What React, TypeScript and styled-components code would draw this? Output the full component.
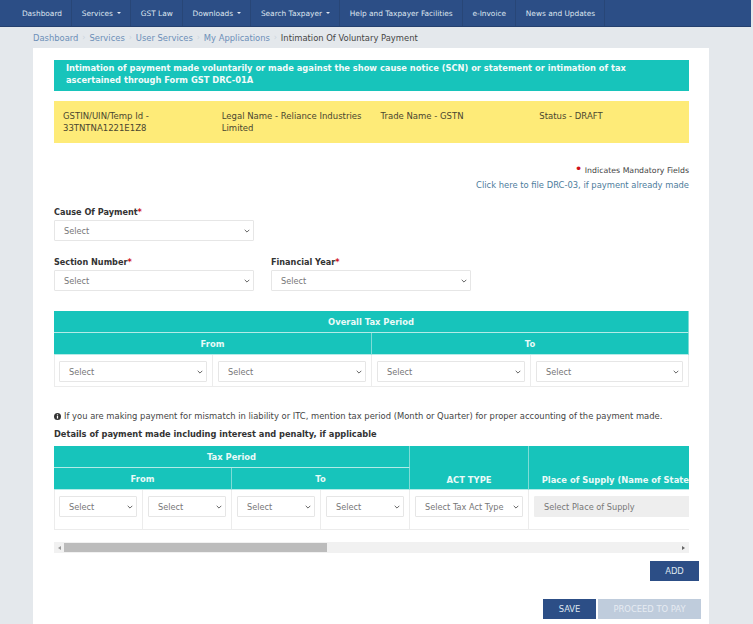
import React from "react";
import styled, { createGlobalStyle } from "styled-components";

const Global = createGlobalStyle`
  html, body { margin: 0; padding: 0; height: 100%; overflow: hidden; background: #e4e8ec; }
  body { font-family: "DejaVu Sans", Verdana, sans-serif; font-size: 8.4px; color: #333; }
  * { box-sizing: border-box; }
`;

const Page = styled.div`
  width: 753px;
  height: 624px;
  overflow: hidden;
`;

const Nav = styled.nav`
  display: flex;
  width: 751px;
  height: 27px;
  padding-left: 12.5px;
  background: #2c4e86;
  border-bottom: 1px solid #24406f;
`;

const NavItem = styled.a`
  display: flex;
  align-items: center;
  gap: 4px;
  padding: 0 9.4px;
  color: #dfe6f0;
  font-size: 7.4px;
  white-space: nowrap;
  border-right: 1px solid #284677;
`;

const Caret = styled.span`
  width: 0;
  height: 0;
  border-left: 2px solid transparent;
  border-right: 2px solid transparent;
  border-top: 2px solid #dfe6f0;
`;

const Crumbs = styled.div`
  display: flex;
  align-items: center;
  height: 21px;
  padding-left: 33px;
  font-size: 8.4px;
`;

const Crumb = styled.a`
  color: #6c8fb8;
`;

const Sep = styled.span`
  width: 11px;
  text-align: center;
  color: #ccd5de;
  font-size: 8px;
`;

const Current = styled.span`
  color: #444;
`;

const Card = styled.main`
  width: 676px;
  height: 576px;
  margin-left: 33px;
  padding: 12px 8px 0 21px;
  background: #fff;
`;

const Banner = styled.div`
  width: 635px;
  height: 31px;
  padding: 2px 12px 0;
  background: #17c4bb;
  color: #f2fbfa;
  font-weight: 700;
  font-size: 8.3px;
  line-height: 12px;
`;

const InfoBar = styled.div`
  display: grid;
  grid-template-columns: repeat(4, 1fr);
  width: 635px;
  height: 42px;
  margin-top: 10px;
  padding-top: 9px;
  background: #feeb78;
  color: #4a4630;
  font-size: 8.5px;
  line-height: 12px;
`;

const InfoCell = styled.div`
  padding: 0 8px 0 9px;
`;

const RightNote = styled.div`
  width: 635px;
  margin-top: 22px;
  text-align: right;
  font-size: 7.8px;
  line-height: 12px;
  color: #444;
`;

const Star = styled.span`
  color: #d0121b;
  font-weight: 700;
`;

const Dot = styled.span`
  color: #d0121b;
  font-size: 13px;
  line-height: 0;
`;

const FileLink = styled.a`
  display: block;
  width: 635px;
  margin-top: 2px;
  text-align: right;
  font-size: 8.4px;
  line-height: 12px;
  color: #4d7c9c;
`;

const Row = styled.div<{ $top: number }>`
  display: flex;
  gap: 17.5px;
  margin-top: ${(p) => p.$top}px;
`;

const Field = styled.div`
  width: 199.5px;
`;

const Label = styled.label`
  display: block;
  height: 14px;
  font-size: 8.15px;
  line-height: 12px;
  font-weight: 700;
  color: #333;
`;

const chevron =
  "data:image/svg+xml,%3Csvg xmlns='http://www.w3.org/2000/svg' width='6' height='4' viewBox='0 0 6 4'%3E%3Cpath d='M.7.8 3 3.1 5.3.8' fill='none' stroke='%23666' stroke-width='1'/%3E%3C/svg%3E";

const Select = styled.select<{ $locked?: boolean }>`
  display: block;
  width: 100%;
  height: 21px;
  padding: 0 14px 0 9px;
  appearance: none;
  font-family: inherit;
  font-size: 8.2px;
  color: #777;
  background-color: ${(p) => (p.$locked ? "#eeeeee" : "#fff")};
  background-image: ${(p) => (p.$locked ? "none" : `url("${chevron}")`)};
  background-repeat: no-repeat;
  background-position: right 3px center;
  border: 1px solid ${(p) => (p.$locked ? "#eeeeee" : "#e6e6e6")};
  border-radius: 1px;
  outline: none;
  opacity: 1;
`;

const TableWrap = styled.div<{ $top: number }>`
  width: 635px;
  margin-top: ${(p) => p.$top}px;
  overflow: hidden;
`;

const Table = styled.table<{ $width: number }>`
  width: ${(p) => p.$width}px;
  table-layout: fixed;
  border-collapse: separate;
  border-spacing: 0;
`;

const Th = styled.th`
  height: 22px;
  padding: 1px 0 0;
  background: #17c4bb;
  color: #eafaf8;
  font-size: 8.4px;
  font-weight: 700;
  text-align: center;
  vertical-align: middle;
  white-space: nowrap;
  border-right: 1px solid #7fdcd6;
  border-bottom: 1px solid #b4ebe7;
`;

const ThBottom = styled(Th)`
  vertical-align: bottom;
  padding-bottom: 4px;
`;

const Td = styled.td<{ $h: number }>`
  height: ${(p) => p.$h}px;
  padding: 6px 5px 0;
  vertical-align: top;
  border-right: 1px solid #ececec;
  border-bottom: 1px solid #ececec;
  &:first-child {
    padding-left: 4px;
    border-left: 1px solid #ececec;
  }
`;

const Note = styled.div`
  display: flex;
  align-items: center;
  gap: 3px;
  margin-top: 23px;
  font-size: 8.4px;
  line-height: 12px;
  color: #444;
  white-space: nowrap;
`;

const NoteIcon = styled.svg`
  flex: none;
  width: 7px;
  height: 7px;
`;

const Details = styled.div`
  margin-top: 6px;
  height: 12px;
  font-size: 8.25px;
  line-height: 12px;
  font-weight: 700;
  color: #333;
`;

const Scrollbar = styled.div`
  display: flex;
  align-items: center;
  justify-content: space-between;
  width: 635px;
  height: 11px;
  margin-top: 12px;
  padding: 0 4px;
  background: #f1f1f1;
`;

const Thumb = styled.div`
  width: 263px;
  height: 9px;
  margin-left: 3px;
  margin-right: auto;
  background: #bcbcbc;
`;

const Arrow = styled.span<{ $right?: boolean }>`
  width: 0;
  height: 0;
  border-top: 2px solid transparent;
  border-bottom: 2px solid transparent;
  ${(p) => (p.$right ? "border-left: 3px solid #666;" : "border-right: 3px solid #999;")}
`;

const AddRow = styled.div`
  display: flex;
  justify-content: flex-end;
  margin: 8px 2px 0 0;
`;

const Actions = styled.div`
  display: flex;
  justify-content: flex-end;
  gap: 2px;
  margin-top: 18px;
`;

const Button = styled.button<{ $w: number; $muted?: boolean }>`
  width: ${(p) => p.$w}px;
  height: 20px;
  padding: 0;
  border: 0;
  font-family: inherit;
  font-size: 8.4px;
  background: ${(p) => (p.$muted ? "#bfccdc" : "#2c4e86")};
  color: ${(p) => (p.$muted ? "#e6ebf2" : "#dfe6f0")};
`;

const navItems: [string, boolean][] = [
  ["Dashboard", false],
  ["Services", true],
  ["GST Law", false],
  ["Downloads", true],
  ["Search Taxpayer", true],
  ["Help and Taxpayer Facilities", false],
  ["e-Invoice", false],
  ["News and Updates", false],
];

const Sel = ({ text = "Select", locked }: { text?: string; locked?: boolean }) => (
  <Select $locked={locked} disabled={locked} defaultValue={text}>
    <option>{text}</option>
  </Select>
);

const InfoIcon = () => (
  <NoteIcon viewBox="0 0 8 8" aria-hidden="true">
    <circle cx="4" cy="4" r="4" fill="#333" />
    <rect x="3.3" y="3.4" width="1.4" height="3" fill="#fff" />
    <rect x="3.3" y="1.5" width="1.4" height="1.2" fill="#fff" />
  </NoteIcon>
);

export default function App() {
  return (
    <Page>
      <Global />
      <Nav>
        {navItems.map(([label, caret]) => (
          <NavItem key={label}>
            {label}
            {caret && <Caret />}
          </NavItem>
        ))}
      </Nav>
      <Crumbs>
        {["Dashboard", "Services", "User Services", "My Applications"].map((c) => (
          <React.Fragment key={c}>
            <Crumb>{c}</Crumb>
            <Sep>›</Sep>
          </React.Fragment>
        ))}
        <Current>Intimation Of Voluntary Payment</Current>
      </Crumbs>
      <Card>
        <Banner>
          Intimation of payment made voluntarily or made against the show cause notice (SCN) or statement or intimation of tax<br />
          ascertained through Form GST DRC-01A
        </Banner>
        <InfoBar>
          <InfoCell>GSTIN/UIN/Temp Id - 33TNTNA1221E1Z8</InfoCell>
          <InfoCell>Legal Name - Reliance Industries Limited</InfoCell>
          <InfoCell>Trade Name - GSTN</InfoCell>
          <InfoCell>Status - DRAFT</InfoCell>
        </InfoBar>
        <RightNote>
          <Dot>•</Dot> Indicates Mandatory Fields
        </RightNote>
        <FileLink>Click here to file DRC-03, if payment already made</FileLink>
        <Row $top={15}>
          <Field>
            <Label>
              Cause Of Payment<Star>*</Star>
            </Label>
            <Sel />
          </Field>
        </Row>
        <Row $top={15}>
          <Field>
            <Label>
              Section Number<Star>*</Star>
            </Label>
            <Sel />
          </Field>
          <Field>
            <Label>
              Financial Year<Star>*</Star>
            </Label>
            <Sel />
          </Field>
        </Row>
        <TableWrap $top={20}>
          <Table $width={635}>
            <colgroup>
              <col width="159" />
              <col width="159" />
              <col width="159" />
              <col width="158" />
            </colgroup>
            <thead>
              <tr>
                <Th colSpan={4}>Overall Tax Period</Th>
              </tr>
              <tr>
                <Th colSpan={2}>From</Th>
                <Th colSpan={2}>To</Th>
              </tr>
            </thead>
            <tbody>
              <tr>
                {[0, 1, 2, 3].map((i) => (
                  <Td key={i} $h={32}>
                    <Sel />
                  </Td>
                ))}
              </tr>
            </tbody>
          </Table>
        </TableWrap>
        <Note>
          <InfoIcon />
          If you are making payment for mismatch in liability or ITC, mention tax period (Month or Quarter) for proper accounting of the payment made.
        </Note>
        <Details>Details of payment made including interest and penalty, if applicable</Details>
        <TableWrap $top={6}>
          <Table $width={668}>
            <colgroup>
              <col width="89" />
              <col width="89" />
              <col width="89" />
              <col width="89" />
              <col width="119" />
              <col width="193" />
            </colgroup>
            <thead>
              <tr>
                <Th colSpan={4}>Tax Period</Th>
                <ThBottom rowSpan={2}>ACT TYPE</ThBottom>
                <ThBottom rowSpan={2}>Place of Supply (Name of State/UT)</ThBottom>
              </tr>
              <tr>
                <Th colSpan={2}>From</Th>
                <Th colSpan={2}>To</Th>
              </tr>
            </thead>
            <tbody>
              <tr>
                {[0, 1, 2, 3].map((i) => (
                  <Td key={i} $h={40}>
                    <Sel />
                  </Td>
                ))}
                <Td $h={40}>
                  <Sel text="Select Tax Act Type" />
                </Td>
                <Td $h={40}>
                  <Sel text="Select Place of Supply" locked />
                </Td>
              </tr>
            </tbody>
          </Table>
        </TableWrap>
        <Scrollbar>
          <Arrow />
          <Thumb />
          <Arrow $right />
        </Scrollbar>
        <AddRow>
          <Button $w={49}>ADD</Button>
        </AddRow>
        <Actions>
          <Button $w={53}>SAVE</Button>
          <Button $w={103} $muted>
            PROCEED TO PAY
          </Button>
        </Actions>
      </Card>
    </Page>
  );
}
